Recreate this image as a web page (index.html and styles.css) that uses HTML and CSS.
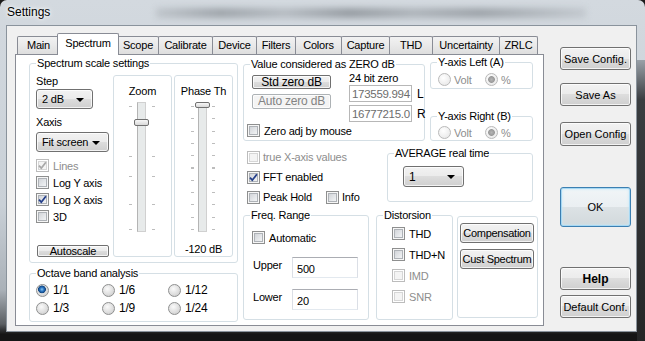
FILE: index.html
```html
<!DOCTYPE html>
<html>
<head>
	<title>Settings</title>
	<link rel="stylesheet" href="styles.css">
</head>
<body>
	<div class="window">
		<div class="titlebar">
			<span class="title">Settings</span>
			<span class="smudge"></span>
		</div>
		<div class="client">
			<div class="tabs-area">
				<div class="tab-strip">
					<div class="tab">Main</div>
					<div class="tab active">Spectrum</div>
					<div class="tab">Scope</div>
					<div class="tab">Calibrate</div>
					<div class="tab">Device</div>
					<div class="tab">Filters</div>
					<div class="tab">Colors</div>
					<div class="tab">Capture</div>
					<div class="tab">THD</div>
					<div class="tab">Uncertainty</div>
					<div class="tab">ZRLC</div>
				</div>
				<div class="tab-page">
					<div class="col-left">
						<fieldset class="group spec">
							<legend>Spectrum scale settings</legend>
							<div class="spec-body">
								<div class="spec-controls">
									<div class="lbl step-lbl">Step</div>
									<div class="combo step-combo">2 dB</div>
									<div class="lbl xaxis-lbl">Xaxis</div>
									<div class="combo xaxis-combo">Fit screen</div>
									<div class="spec-checks">
										<label class="chk off"><span class="box"><svg viewBox="0 0 13 13"><path d="M3 6.6l2.3 2.6 4.6-6"/></svg></span>Lines</label>
										<label class="chk"><span class="box"></span>Log Y axis</label>
										<label class="chk"><span class="box"><svg viewBox="0 0 13 13"><path d="M3 6.6l2.3 2.6 4.6-6"/></svg></span>Log X axis</label>
										<label class="chk"><span class="box"></span>3D</label>
									</div>
									<button class="btn thin autoscale">Autoscale</button>
								</div>
								<div class="slider-box zoom-box">
									<div class="slider-title">Zoom</div>
									<div class="slider zoom"><span class="track"></span><span class="thumb"></span></div>
								</div>
								<div class="slider-box phase-box">
									<div class="slider-title">Phase Th</div>
									<div class="slider phase"><span class="track"></span><span class="thumb"></span></div>
									<div class="slider-value">-120 dB</div>
								</div>
							</div>
						</fieldset>
						<fieldset class="group octave">
							<legend>Octave band analysis</legend>
							<div class="octave-grid">
								<label class="opt"><span class="radio on"></span>1/1</label>
								<label class="opt"><span class="radio"></span>1/6</label>
								<label class="opt"><span class="radio"></span>1/12</label>
								<label class="opt"><span class="radio"></span>1/3</label>
								<label class="opt"><span class="radio"></span>1/9</label>
								<label class="opt"><span class="radio"></span>1/24</label>
							</div>
						</fieldset>
					</div>
					<div class="col-right">
						<div class="row-top">
							<fieldset class="group zero">
								<legend>Value considered as ZERO dB</legend>
								<div class="zero-body">
									<div class="zero-buttons">
										<button class="btn thin std-btn">Std zero dB</button>
										<button class="btn thin dis auto-btn">Auto zero dB</button>
									</div>
									<div class="zero-values">
										<div class="lbl bit-lbl">24 bit zero</div>
										<div class="value-row"><input class="field dim" value="173559.994" readonly><span>L</span></div>
										<div class="value-row second"><input class="field dim" value="16777215.0" readonly><span>R</span></div>
									</div>
								</div>
								<label class="chk zero-adj"><span class="box"></span>Zero adj by mouse</label>
							</fieldset>
							<div class="yaxis-col">
								<fieldset class="group y-left">
									<legend>Y-axis Left (A)</legend>
									<div class="radio-row">
										<label class="opt off"><span class="radio"></span>Volt</label>
										<label class="opt off"><span class="radio on"></span>%</label>
									</div>
								</fieldset>
								<fieldset class="group y-right">
									<legend>Y-axis Right (B)</legend>
									<div class="radio-row">
										<label class="opt off"><span class="radio"></span>Volt</label>
										<label class="opt off"><span class="radio on"></span>%</label>
									</div>
								</fieldset>
							</div>
						</div>
						<div class="row-mid">
							<div class="opt-checks">
								<label class="chk off"><span class="box"></span>true X-axis values</label>
								<label class="chk"><span class="box"><svg viewBox="0 0 13 13"><path d="M3 6.6l2.3 2.6 4.6-6"/></svg></span>FFT enabled</label>
								<div class="peak-row">
									<label class="chk peak"><span class="box"></span>Peak Hold</label>
									<label class="chk"><span class="box"></span>Info</label>
								</div>
							</div>
							<fieldset class="group average">
								<legend>AVERAGE real time</legend>
								<div class="combo avg-combo">1</div>
							</fieldset>
						</div>
						<div class="row-bottom">
							<fieldset class="group freq">
								<legend>Freq. Range</legend>
								<label class="chk auto-chk"><span class="box"></span>Automatic</label>
								<div class="range-row upper"><span class="range-lbl">Upper</span><input class="field" value="500"></div>
								<div class="range-row lower"><span class="range-lbl">Lower</span><input class="field" value="20"></div>
							</fieldset>
							<fieldset class="group dist">
								<legend>Distorsion</legend>
								<div class="dist-checks">
									<label class="chk"><span class="box"></span>THD</label>
									<label class="chk"><span class="box"></span>THD+N</label>
									<label class="chk off"><span class="box"></span>IMD</label>
									<label class="chk off"><span class="box"></span>SNR</label>
								</div>
							</fieldset>
							<div class="comp-box">
								<button class="btn comp-btn">Compensation</button>
								<button class="btn comp-btn cust">Cust Spectrum</button>
							</div>
						</div>
					</div>
				</div>
			</div>
			<div class="side-buttons">
				<button class="btn side save-config">Save Config.</button>
				<button class="btn side save-as">Save As</button>
				<button class="btn side open-config">Open Config</button>
				<button class="btn side ok">OK</button>
				<button class="btn side help">Help</button>
				<button class="btn side default-conf">Default Conf.</button>
			</div>
		</div>
	</div>
</body>
</html>
```

FILE: styles.css
```css
	body {
		margin: 0;
		padding: 0;
		background: #1b1b1b;
		font-family: 'Liberation Sans', Arial, sans-serif;
		font-size: 11px;
		letter-spacing: -0.2px;
		color: #000;
	}
	.window {
		width: 645px;
		height: 341px;
		box-sizing: border-box;
		padding: 0 8px 9px 6px;
		display: flex;
		flex-direction: column;
		border-radius: 7px 7px 0 0;
		overflow: hidden;
		background:
			linear-gradient(to bottom, #9aa1a8 0, #3a3d40 40px, #202020 100%) right 0 top 60px / 8px 100% no-repeat,
			linear-gradient(to bottom, #d3d9df 0, #c9d0d7 60%, #aab1b8 85%, #5b5f63 95%, #151515 98%);
	}
	.titlebar {
		height: 25px;
		line-height: 24px;
		position: relative;
		flex: none;
	}
	.title {
		padding-left: 1px;
		font-size: 12px;
		letter-spacing: 0;
		text-shadow: 0 0 6px #fff, 0 0 3px #fff;
		position: relative;
		z-index: 1;
	}
	/* blurred text of the window behind the glass */
	.smudge {
		position: absolute;
		left: 150px;
		top: 8px;
		width: 430px;
		height: 10px;
		background: linear-gradient(to right, #b3b9bf, #7e848a 15%, #a4aab0 30%, #6f757b 45%, #979da3 60%, #7b8187 75%, #b9bfc5);
		filter: blur(3px);
		opacity: 0.6;
	}
	.client {
		flex: 1;
		display: flex;
		background: #f0f0f0;
		border: 1px solid #8a939c;
	}
	.tabs-area {
		margin: 7px 0 0 8px;
		width: 529px;
	}
	.tab-strip {
		display: grid;
		grid-template-columns: 42px 58px 41px 54px 44px 39px 46px 48px 43px 67px 38px;
		height: 21px;
		padding-left: 2px;
		position: relative;
		z-index: 1;
	}
	.tab {
		margin: 3px -1px 0 0;
		height: 18px;
		box-sizing: border-box;
		border: 1px solid #898c95;
		border-bottom: none;
		border-radius: 2px 2px 0 0;
		background: linear-gradient(#f2f2f2, #e9e9e9 50%, #dedede);
		text-align: center;
		line-height: 16px;
	}
	.tab.active {
		margin: 0 -2px -1px -2px;
		height: 22px;
		background: #fff;
		line-height: 18px;
		position: relative;
	}
	.tab-page {
		height: 272px;
		box-sizing: border-box;
		border: 1px solid #898c95;
		background: #fff;
		display: flex;
		padding: 1px 0 0 13px;
	}

	/* group boxes */
	.group {
		margin: 0;
		padding: 0;
		border: 1px solid #d5dfe5;
		border-radius: 3px;
		box-sizing: border-box;
		min-width: 0;
	}
	.group legend {
		margin-left: 6px;
		padding: 0 1px;
		height: 13px;
		line-height: 13px;
	}
	.lbl {
		line-height: 13px;
		height: 13px;
	}

	/* checkboxes and radios */
	.chk, .opt {
		display: flex;
		align-items: center;
		gap: 4px;
		white-space: nowrap;
	}
	.chk.off, .opt.off {
		color: #8d8d8d;
	}
	.box {
		width: 13px;
		height: 13px;
		box-sizing: border-box;
		flex: none;
		position: relative;
		border: 1px solid #8e8f8f;
		background: linear-gradient(135deg, #c9ccd1, #eceef0 70%, #f8f8f8);
		box-shadow: inset 0 0 0 1px #f6f6f6, inset 0 0 0 2px #aeb2b7;
	}
	.off .box {
		border-color: #bcbcbc;
		background: #f4f4f4;
		box-shadow: inset 0 0 0 1px #fff, inset 0 0 0 2px #d6d6d6;
	}
	.box svg {
		position: absolute;
		left: -1px;
		top: -1px;
		width: 13px;
		height: 13px;
		fill: none;
		stroke: #243f8a;
		stroke-width: 1.8;
	}
	.off .box svg {
		stroke: #a8a8a8;
	}
	.radio {
		width: 13px;
		height: 13px;
		box-sizing: border-box;
		flex: none;
		border-radius: 50%;
		border: 1px solid #8e8f8f;
		background: radial-gradient(circle at 40% 35%, #fafafa, #dcdcdc 60%, #c4c4c4);
	}
	.radio.on {
		background:
			radial-gradient(circle at 45% 40%, #8ac8f2 0, #2a73c0 2px, #12457f 3.6px, transparent 4.2px),
			radial-gradient(circle at 40% 35%, #fafafa, #dcdcdc 60%, #c4c4c4);
	}
	.off .radio {
		border-color: #b9b9b9;
		background: radial-gradient(circle at 40% 35%, #fff, #ececec 70%);
	}
	.off .radio.on {
		background:
			radial-gradient(circle, #b5b5b5 0, #9a9a9a 3px, transparent 3.8px),
			radial-gradient(circle at 40% 35%, #fff, #ececec 70%);
	}

	/* buttons, combos, fields */
	.btn {
		font: inherit;
		letter-spacing: inherit;
		color: #000;
		padding: 0;
		border: 1px solid #707070;
		border-radius: 3px;
		background: linear-gradient(#f2f2f2 0, #ebebeb 50%, #dddddd 50%, #cfcfcf 100%);
		box-shadow: inset 0 0 0 1px rgba(255, 255, 255, 0.75);
		box-sizing: border-box;
		display: block;
		white-space: nowrap;
	}
	.btn.thin {
		line-height: 11px;
		border-radius: 2px;
	}
	.btn.dis {
		color: #838383;
		border-color: #adb2b5;
		background: #f4f4f4;
	}
	.combo {
		height: 20px;
		box-sizing: border-box;
		border: 1px solid #707070;
		border-radius: 3px;
		background: linear-gradient(#f2f2f2 0, #ebebeb 50%, #dddddd 50%, #cfcfcf 100%);
		box-shadow: inset 0 0 0 1px rgba(255, 255, 255, 0.75);
		display: flex;
		align-items: center;
		padding-left: 5px;
		position: relative;
	}
	.combo::after {
		content: "";
		position: absolute;
		right: 8px;
		top: 8px;
		border-left: 4px solid transparent;
		border-right: 4px solid transparent;
		border-top: 4px solid #000;
	}
	.field {
		font: inherit;
		letter-spacing: inherit;
		box-sizing: border-box;
		border: 1px solid #abadb3;
		border-left-color: #dbdfe6;
		border-right-color: #dbdfe6;
		border-bottom-color: #e3e9ef;
		background: #fff;
		padding: 0 0 0 4px;
		margin: 0;
		outline: none;
	}
	.field.dim {
		color: #6d6d6d;
		border-color: #b7b7b7;
		padding-left: 2px;
	}

	/* spectrum scale settings */
	.col-left {
		width: 209px;
	}
	.spec {
		margin-top: 1px;
		height: 206px;
	}
	.spec-body {
		display: flex;
	}
	.spec-controls {
		margin-left: 6px;
		width: 73px;
	}
	.step-lbl {
		margin-top: 5px;
	}
	.step-combo {
		margin-top: 1px;
		width: 57px;
	}
	.xaxis-lbl {
		margin-top: 7px;
	}
	.xaxis-combo {
		margin-top: 3px;
		width: 73px;
	}
	.spec-checks {
		margin-top: 5px;
	}
	.spec-checks .chk {
		height: 17px;
	}
	.btn.autoscale {
		margin: 20px 0 0 1px;
		width: 72px;
		height: 12px;
		line-height: 9px;
	}
	.slider-box {
		margin-top: 5px;
		width: 59px;
		height: 182px;
		box-sizing: border-box;
		border: 1px solid #d5dfe5;
		border-radius: 3px;
		padding-top: 9px;
		text-align: center;
	}
	.zoom-box {
		margin-left: 4px;
	}
	.phase-box {
		margin-left: 2px;
	}
	.slider-title, .slider-value {
		line-height: 13px;
		height: 13px;
	}
	.slider {
		margin-top: 4px;
		height: 130px;
		position: relative;
	}
	.slider.zoom {
		background:
			linear-gradient(to bottom, transparent 4px, #bdbdbd 4px 5px, transparent 5px 54px, #bdbdbd 54px 55px, transparent 55px 74px, #bdbdbd 74px 75px, transparent 75px 102px, #bdbdbd 102px 103px, transparent 103px 127px, #bdbdbd 127px 128px, transparent 128px) 15px 0 / 3px 130px no-repeat,
			linear-gradient(to bottom, transparent 4px, #bdbdbd 4px 5px, transparent 5px 54px, #bdbdbd 54px 55px, transparent 55px 74px, #bdbdbd 74px 75px, transparent 75px 102px, #bdbdbd 102px 103px, transparent 103px 127px, #bdbdbd 127px 128px, transparent 128px) 38px 0 / 3px 130px no-repeat;
	}
	.slider.phase {
		background:
			repeating-linear-gradient(to bottom, #bdbdbd 0 1px, transparent 1px 12.3px) 16px 4px / 3px 125px no-repeat,
			repeating-linear-gradient(to bottom, #bdbdbd 0 1px, transparent 1px 12.3px) 37px 4px / 3px 125px no-repeat;
	}
	.track {
		display: block;
		margin-left: 23px;
		width: 9px;
		height: 130px;
		box-sizing: border-box;
		border: 1px solid #d0d0d0;
		border-left-color: #b4b4b4;
		background: #e7eaea;
	}
	.thumb {
		position: absolute;
		left: 20px;
		width: 15px;
		height: 7px;
		box-sizing: border-box;
		border: 1px solid #707070;
		border-radius: 2px;
		background: linear-gradient(#f7f7f7, #d9d9d9);
	}
	.zoom .thumb {
		top: 17px;
	}
	.phase .thumb {
		top: 0;
		height: 6px;
	}
	.slider-value {
		margin-top: 11px;
	}

	/* octave band analysis */
	.octave {
		margin-top: 4px;
		height: 55px;
	}
	.octave-grid {
		margin: 1px 0 0 6px;
		display: grid;
		grid-template-columns: 66px 66px 66px;
		grid-auto-rows: 18px;
		font-size: 12px;
	}

	/* right part of the tab page */
	.col-right {
		margin-left: 5px;
		width: 295px;
	}
	.row-top {
		display: flex;
		height: 85px;
	}
	.zero {
		margin-top: 2px;
		width: 182px;
		height: 83px;
	}
	.zero-body {
		display: flex;
	}
	.zero-buttons {
		margin-left: 8px;
		width: 79px;
	}
	.btn.std-btn {
		margin-top: 4px;
		width: 79px;
		height: 14px;
		font-size: 12px;
	}
	.btn.auto-btn {
		margin-top: 5px;
		width: 79px;
		height: 15px;
		font-size: 12px;
	}
	.zero-values {
		margin-left: 18px;
	}
	.bit-lbl {
		margin-top: 1px;
	}
	.value-row {
		display: flex;
		align-items: center;
		gap: 5px;
		font-size: 12px;
	}
	.value-row.second {
		margin-top: 3px;
	}
	.value-row .field {
		width: 63px;
		height: 17px;
		font-size: 11.5px;
		letter-spacing: -0.3px;
	}
	.zero-adj {
		margin: 2px 0 0 3px;
		height: 13px;
	}
	.yaxis-col {
		margin-left: 5px;
		width: 103px;
	}
	.y-left {
		height: 33px;
	}
	.y-right {
		margin-top: 21px;
		height: 31px;
	}
	.radio-row {
		display: flex;
		margin: 4px 0 0 7px;
		height: 13px;
	}
	.y-right .radio-row {
		margin-top: 3px;
	}
	.radio-row .opt {
		width: 48px;
		gap: 3px;
	}
	.row-mid {
		display: flex;
		margin-top: 6px;
		height: 62px;
	}
	.opt-checks {
		margin-left: 4px;
		width: 140px;
	}
	.opt-checks .chk {
		height: 20px;
		gap: 3px;
	}
	.peak-row {
		display: flex;
	}
	.peak {
		width: 79px;
	}
	.average {
		width: 146px;
		height: 55px;
	}
	.avg-combo {
		margin: 6px 0 0 15px;
		width: 61px;
		height: 21px;
		font-size: 12px;
	}
	.row-bottom {
		display: flex;
		height: 111px;
	}
	.freq {
		width: 126px;
		height: 111px;
	}
	.auto-chk {
		margin: 9px 0 0 8px;
		height: 13px;
	}
	.range-row {
		display: flex;
		align-items: center;
		margin-top: 13px;
	}
	.range-row.lower {
		margin-top: 11px;
	}
	.range-lbl {
		margin-left: 9px;
		width: 39px;
		margin-top: -5px;
	}
	.range-row .field {
		width: 66px;
		height: 21px;
		padding-top: 3px;
	}
	.dist {
		margin-left: 7px;
		width: 77px;
		height: 111px;
	}
	.dist-checks {
		margin: 1px 0 0 15px;
	}
	.dist-checks .chk {
		height: 21px;
	}
	.comp-box {
		margin: 7px 0 0 4px;
		width: 81px;
		height: 102px;
		box-sizing: border-box;
		border: 1px solid #d5dfe5;
		border-radius: 3px;
		padding: 6px 0 0 2px;
	}
	.btn.comp-btn {
		width: 74px;
		height: 20px;
		letter-spacing: -0.3px;
	}
	.btn.cust {
		margin-top: 6px;
	}

	/* buttons beside the tabs */
	.side-buttons {
		margin-left: 16px;
		width: 71px;
	}
	.btn.side {
		width: 71px;
		height: 23px;
		letter-spacing: 0;
	}
	.btn.save-config {
		margin-top: 21px;
	}
	.btn.save-as {
		margin-top: 13px;
	}
	.btn.open-config {
		margin-top: 16px;
		height: 24px;
	}
	.btn.ok {
		margin-top: 41px;
		height: 40px;
		border-color: #3c7fb1;
		background: linear-gradient(#f1f5f7 0, #eaeff2 50%, #dce2e5 50%, #d2d9dc 100%);
		box-shadow: inset 0 0 0 1px #a6d8f3, inset 0 0 3px 1px #c6e8f8;
	}
	.btn.help {
		margin-top: 40px;
		font-weight: bold;
		font-size: 12px;
	}
	.btn.default-conf {
		margin-top: 5px;
	}
```
